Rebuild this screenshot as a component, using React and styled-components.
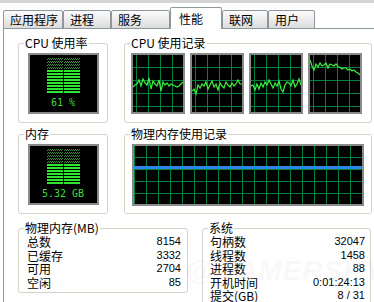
import React from 'react';
import styled, { createGlobalStyle } from 'styled-components';

const Global = createGlobalStyle`
  html, body { margin: 0; padding: 0; background: #fff; }
  body {
    font-family: "Noto Sans CJK SC", "Liberation Sans", sans-serif;
    font-size: 12px;
    color: #000;
  }
`;

const Window = styled.div`
  position: relative;
  width: 374px;
  height: 302px;
  overflow: hidden;
  box-sizing: border-box;
  border-top: 3px solid #d4d4d4;
  background: #fff;
`;

const TabStrip = styled.div`
  position: relative;
  z-index: 1;
  display: flex;
  align-items: flex-end;
  height: 26px;
  padding-left: 3px;
  margin-bottom: -1px;
`;

const Tab = styled.div`
  box-sizing: border-box;
  width: ${p => p.$w}px;
  height: ${p => (p.$active ? 22 : 19)}px;
  padding-left: ${p => (p.$active ? 8 : 6)}px;
  display: flex;
  align-items: center;
  border: 1px solid #8e979e;
  border-bottom: ${p => (p.$active ? 'none' : '1px solid #8e979e')};
  border-radius: 2px 2px 0 0;
  background: ${p => (p.$active ? '#fff' : 'linear-gradient(#fbfbfb, #dcdcdc)')};
  font-size: 12px;
  line-height: 12px;
  white-space: nowrap;
`;

const Panel = styled.div`
  margin-left: 3px;
  border-left: 1px solid #8e979e;
  border-top: 1px solid #8e979e;
  padding: 8px 0 0 14px;
  display: flex;
  flex-direction: column;
  gap: 5px;
`;

const Row = styled.div`
  display: flex;
  gap: ${p => p.$gap}px;
  margin-top: ${p => p.$mt || 0}px;
`;

const Group = styled.fieldset`
  margin: 0;
  padding: 0;
  min-width: 0;
  box-sizing: border-box;
  flex: none;
  width: ${p => p.$w}px;
  height: ${p => p.$h}px;
  border: 1px solid #d3d3cc;
  border-radius: 3px;
`;

const Legend = styled.legend`
  margin-left: 5px;
  padding: 0 1px;
  font-size: 12px;
  line-height: 12px;
  white-space: nowrap;
`;

const MeterBody = styled.div`
  display: flex;
  justify-content: center;
  padding-top: 4px;
`;

const Screen = styled.div`
  box-sizing: border-box;
  width: 71px;
  height: 61px;
  border: 2px solid #8a8a8a;
  background: #000;
  display: flex;
  flex-direction: column;
  align-items: center;
  padding-top: 3px;
`;

const Bars = styled.div`
  display: flex;
  flex-direction: column;
  gap: 1px;
`;

const BarRow = styled.div`
  display: flex;
  gap: 1px;
`;

const Seg = styled.div`
  width: 16px;
  height: 2px;
  background: ${p =>
    p.$on
      ? '#2ee62e'
      : 'repeating-conic-gradient(#3f8f3f 0 25%, #000 0 50%) 0 0 / 2px 2px'};
`;

const Readout = styled.div`
  margin-top: 4px;
  font-family: "DejaVu Sans Mono", "Liberation Mono", monospace;
  font-size: 10px;
  line-height: 11px;
  color: #3fdc3f;
  white-space: pre;
`;

const GraphRow = styled.div`
  display: flex;
  gap: 5px;
  padding: 4px 0 0 6px;
`;

const Graph = styled.div`
  box-sizing: border-box;
  width: ${p => p.$w}px;
  height: ${p => p.$h}px;
  border: 2px solid #8a8a8a;
  background-color: #000;
  background-image:
    linear-gradient(#00803f 1px, transparent 1px),
    linear-gradient(90deg, #00803f 1px, transparent 1px);
  background-size: 12px ${p => p.$gy}px;
  background-position: ${p => p.$ox}px ${p => p.$oy}px;
  overflow: hidden;
`;

const MemGraphWrap = styled.div`
  padding: 4px 0 0 7px;
`;

const Info = styled.div`
  padding: 1px ${p => p.$pr}px 0 ${p => p.$pl}px;
`;

const InfoRow = styled.div`
  display: flex;
  justify-content: space-between;
  align-items: center;
  height: 13.6px;
  line-height: 13.6px;
`;

const Label = styled.span`
  font-size: 12px;
`;

const Value = styled.span`
  font-family: "Liberation Sans", Arial, sans-serif;
  font-size: 11px;
`;

const Watermark = styled.div`
  position: absolute;
  left: 186px;
  top: 252px;
  font-family: "Liberation Sans", Arial, sans-serif;
  font-weight: bold;
  font-style: italic;
  font-size: 28px;
  letter-spacing: 1px;
  color: rgba(200, 200, 200, 0.12);
  pointer-events: none;
  white-space: nowrap;
`;

const tabs = [
  { label: '应用程序', w: 60 },
  { label: '进程', w: 48 },
  { label: '服务', w: 59 },
  { label: '性能', w: 52, active: true },
  { label: '联网', w: 46 },
  { label: '用户', w: 47 },
];

function Meter({ on, text }) {
  const rows = Array.from({ length: 12 }, (_, i) => i >= 12 - on);
  return (
    <MeterBody>
      <Screen>
        <Bars>
          {rows.map((lit, i) => (
            <BarRow key={i}>
              <Seg $on={lit} />
              <Seg $on={lit} />
            </BarRow>
          ))}
        </Bars>
        <Readout>{text}</Readout>
      </Screen>
    </MeterBody>
  );
}

const cpuData = [
  [32, 30, 29, 25, 31, 24, 28, 30, 23, 34, 26, 29, 31, 25, 36, 27, 30, 28, 31, 29, 30, 31, 32, 31, 29, 27],
  [36, 34, 39, 30, 33, 29, 31, 27, 34, 30, 26, 32, 29, 35, 28, 31, 33, 27, 30, 32, 28, 31, 29, 25, 29, 29],
  [31, 30, 35, 29, 34, 28, 32, 27, 30, 25, 29, 33, 28, 31, 26, 34, 37, 30, 27, 28, 31, 25, 32, 29, 24, 30],
  [5, 11, 15, 9, 12, 8, 11, 10, 8, 13, 9, 10, 11, 9, 12, 12, 14, 13, 13, 15, 14, 16, 15, 17, 18, 20],
];

function CpuGraph({ data }) {
  const pts = data.map((y, i) => `${i * 2},${y}`).join(' ');
  return (
    <Graph $w={54} $h={61} $gy={13} $ox={3} $oy={12}>
      <svg width="50" height="57" viewBox="0 0 50 57">
        <polyline points={pts} fill="none" stroke="#3ef03e" strokeWidth="1.2" />
      </svg>
    </Graph>
  );
}

export default function App() {
  return (
    <>
      <Global />
      <Window>
        <TabStrip>
          {tabs.map(t => (
            <Tab key={t.label} $w={t.w} $active={t.active}>
              {t.label}
            </Tab>
          ))}
        </TabStrip>
        <Panel>
          <Row $gap={16}>
            <Group $w={90} $h={86}>
              <Legend>CPU 使用率</Legend>
              <Meter on={8} text="61 %" />
            </Group>
            <Group $w={248} $h={86}>
              <Legend>CPU 使用记录</Legend>
              <GraphRow>
                {cpuData.map((d, i) => (
                  <CpuGraph key={i} data={d} />
                ))}
              </GraphRow>
            </Group>
          </Row>
          <Row $gap={16}>
            <Group $w={90} $h={86}>
              <Legend>内存</Legend>
              <Meter on={7} text="5.32 GB" />
            </Group>
            <Group $w={248} $h={86}>
              <Legend>物理内存使用记录</Legend>
              <MemGraphWrap>
                <Graph $w={232} $h={62} $gy={12} $ox={0} $oy={11}>
                  <svg width="228" height="58" viewBox="0 0 228 58">
                    <rect x="0" y="20" width="228" height="3" fill="#2a86ea" />
                  </svg>
                </Graph>
              </MemGraphWrap>
            </Group>
          </Row>
          <Row $gap={14} $mt={3}>
            <Group $w={170} $h={71}>
              <Legend>物理内存(MB)</Legend>
              <Info $pl={8} $pr={6}>
                <InfoRow><Label>总数</Label><Value>8154</Value></InfoRow>
                <InfoRow><Label>已缓存</Label><Value>3332</Value></InfoRow>
                <InfoRow><Label>可用</Label><Value>2704</Value></InfoRow>
                <InfoRow><Label>空闲</Label><Value>85</Value></InfoRow>
              </Info>
            </Group>
            <Group $w={169} $h={90}>
              <Legend>系统</Legend>
              <Info $pl={7} $pr={5}>
                <InfoRow><Label>句柄数</Label><Value>32047</Value></InfoRow>
                <InfoRow><Label>线程数</Label><Value>1458</Value></InfoRow>
                <InfoRow><Label>进程数</Label><Value>88</Value></InfoRow>
                <InfoRow><Label>开机时间</Label><Value>0:01:24:13</Value></InfoRow>
                <InfoRow><Label>提交(GB)</Label><Value>8 / 31</Value></InfoRow>
              </Info>
            </Group>
          </Row>
          <Row $gap={14}>
            <Group $w={170} $h={71}>
              <Legend>核心内存(MB)</Legend>
            </Group>
          </Row>
        </Panel>
        <Watermark>@GAMERSKY</Watermark>
      </Window>
    </>
  );
}
